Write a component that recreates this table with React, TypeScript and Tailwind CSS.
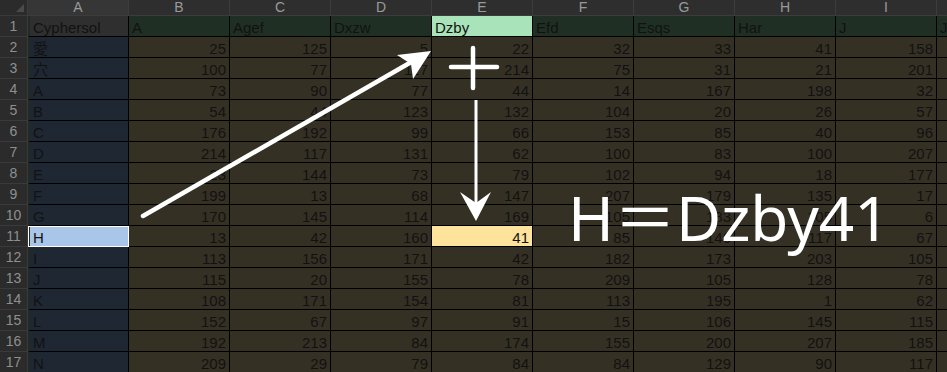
import React from 'react'

const cols = ['A', 'B', 'C', 'D', 'E', 'F', 'G', 'H', 'I', 'J']
const headers = ['Cyphersol', 'A', 'Agef', 'Dxzw', 'Dzby', 'Efd', 'Esqs', 'Har', 'J', 'J']

const rows: [string, number[]][] = [
  ['愛', [25, 125, 5, 22, 32, 33, 41, 158]],
  ['穴', [100, 77, 117, 214, 75, 31, 21, 201]],
  ['A', [73, 90, 77, 44, 14, 167, 198, 32]],
  ['B', [54, 44, 123, 132, 104, 20, 26, 57]],
  ['C', [176, 192, 99, 66, 153, 85, 40, 96]],
  ['D', [214, 117, 131, 62, 100, 83, 100, 207]],
  ['E', [23, 144, 73, 79, 102, 94, 18, 177]],
  ['F', [199, 13, 68, 147, 207, 179, 135, 17]],
  ['G', [170, 145, 114, 169, 105, 183, 105, 6]],
  ['H', [13, 42, 160, 41, 85, 146, 117, 67]],
  ['I', [113, 156, 171, 42, 182, 173, 203, 105]],
  ['J', [115, 20, 155, 78, 209, 105, 128, 78]],
  ['K', [108, 171, 154, 81, 113, 195, 1, 62]],
  ['L', [152, 67, 97, 91, 15, 106, 145, 115]],
  ['M', [192, 213, 84, 174, 155, 200, 207, 185]],
  ['N', [209, 29, 79, 84, 84, 129, 90, 117]],
]

const cell = 'h-[21px] border-r border-b border-black px-[3px] flex items-end pb-[1px] text-[15px] leading-none text-[#121212] overflow-hidden whitespace-nowrap'

export default function App() {
  return (
    <div
      className="relative w-[947px] h-[372px] overflow-hidden bg-[#2b2b2b]"
      style={{ fontFamily: '"Liberation Sans", "Noto Sans CJK JP", Arial, sans-serif' }}
    >
      <div className="grid grid-cols-[28px_repeat(10,101px)] grid-rows-[16px_repeat(17,21px)]">
        {/* corner + column letters */}
        <div className="relative bg-[#2b2b2b] border-r border-b border-[#3a3a3a]">
          <div className="absolute right-[3px] bottom-[3px] w-0 h-0 border-l-[8px] border-l-transparent border-b-[8px] border-b-[#4a4a4a]" />
        </div>
        {cols.map((c, i) => (
          <div
            key={c}
            className={`flex items-center justify-center text-[14px] text-[#9a9a9a] border-r border-b border-[#3c3c3c] ${
              i === 0 ? 'bg-[#363636]' : 'bg-[#2e2e2e]'
            }`}
          >
            {c}
          </div>
        ))}

        {/* row 1: field names */}
        <div className="flex items-center justify-center text-[14px] text-[#8f8f8f] bg-[#2b2b2b] border-r border-b border-[#3a3a3a]">1</div>
        {headers.map((h, i) => (
          <div
            key={i}
            className={`${cell} ${
              i === 0
                ? 'bg-[#2f2f2f] border-l-2 border-l-[#1f2b24]'
                : i === 4
                ? 'bg-[#a9e3b9]'
                : 'bg-[#1f2f24]'
            }`}
          >
            {h}
          </div>
        ))}

        {rows.map(([name, vals], r) => {
          const n = r + 2
          return (
            <React.Fragment key={n}>
              <div className="flex items-center justify-center text-[14px] text-[#8f8f8f] bg-[#2b2b2b] border-r border-b border-[#3a3a3a]">
                {n}
              </div>
              <div
                className={`${cell} border-l-2 border-l-[#1f2b24] ${
                  n === 11 ? 'bg-[#a9c5e8] outline outline-1 outline-white -outline-offset-1' : 'bg-[#1f2733]'
                }`}
              >
                {name}
              </div>
              {vals.map((v, i) => (
                <div
                  key={i}
                  className={`${cell} justify-end ${
                    n === 11 && i === 3 ? 'bg-[#fde39b]' : 'bg-[#353024]'
                  }`}
                >
                  {v}
                </div>
              ))}
              <div className={`${cell} bg-[#353024]`} />
            </React.Fragment>
          )
        })}
      </div>

      {/* annotation arrows */}
      <svg className="absolute inset-0 pointer-events-none" width={947} height={372}>
        <line x1={143} y1={216} x2={420} y2={57} stroke="white" strokeWidth={4.5} strokeLinecap="round" />
        <polygon points="431,51 397,55 411,64 413,79" fill="white" />
        <line x1={451} y1={67} x2={497} y2={67} stroke="white" strokeWidth={4.5} strokeLinecap="round" />
        <line x1={473} y1={48} x2={473} y2={88} stroke="white" strokeWidth={4.5} strokeLinecap="round" />
        <line x1={476} y1={100} x2={476} y2={206} stroke="white" strokeWidth={3} />
        <polygon points="476,221 460,192 476,203 491,192" fill="white" />
      </svg>

      <div
        className="absolute left-[568px] top-[186px] text-[62px] leading-none text-white whitespace-nowrap"
        style={{ fontFamily: '"Noto Sans", "Noto Sans CJK SC", sans-serif' }}
      >
        H＝Dzby41
      </div>
    </div>
  )
}
